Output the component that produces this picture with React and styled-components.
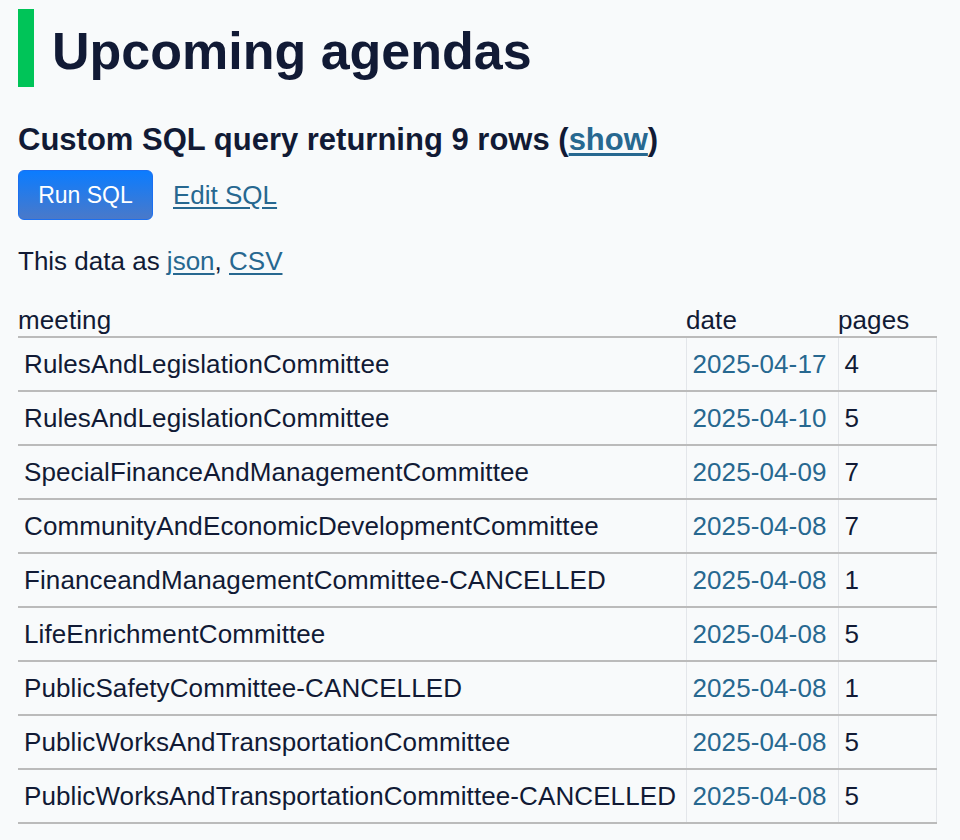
import styled, { createGlobalStyle } from "styled-components";

const Global = createGlobalStyle`
  body {
    margin: 0;
    background: #f8fafb;
    color: #111a35;
    font-family: "Liberation Sans", Arial, sans-serif;
  }
`;

const Page = styled.div`
  padding: 9px 18px 20px;
`;

const Title = styled.h1`
  margin: 0;
  font-size: 52px;
  font-weight: 700;
  line-height: 78px;
  border-left: 16px solid #00c458;
  padding-left: 18px;
  padding-top: 3px;
  height: 75px;
  color: #111a35;
`;

const Sub = styled.h2`
  margin: 33px 0 0;
  font-size: 31px;
  font-weight: 700;
  line-height: 40px;
`;

const Link = styled.a`
  color: #276890;
  text-decoration: ${(p) => (p.$plain ? "none" : "underline")};
  text-underline-offset: 3px;
`;

const Actions = styled.div`
  display: flex;
  align-items: center;
  gap: 20px;
  margin-top: 10px;
  font-size: 26px;
`;

const Button = styled.button`
  width: 135px;
  height: 50px;
  border: 1px solid #1b6ff0;
  border-radius: 6px;
  background: linear-gradient(#0b7cff, #4a79c9);
  color: #fff;
  font: 23px "Liberation Sans", Arial, sans-serif;
`;

const Para = styled.p`
  margin: 26px 0 0;
  font-size: 26px;
  line-height: 30px;
`;

const Table = styled.table`
  margin-top: 30px;
  border-collapse: collapse;
  font-size: 26px;
  letter-spacing: 0.1px;
  table-layout: fixed;
  width: 918px;
`;

const Th = styled.th`
  text-align: left;
  font-weight: 400;
  padding: 0 0 2px 0;
  line-height: 28px;
  border-bottom: 2px solid #bbb;
  width: ${(p) => p.$w}px;
`;

const Td = styled.td`
  padding: 11px 6px;
  line-height: 30px;
  border-bottom: 2px solid #bbb;
  border-left: ${(p) => (p.$first ? "none" : "1px solid #e3e6ea")};
  border-right: ${(p) => (p.$last ? "1px solid #e3e6ea" : "none")};
  white-space: nowrap;
`;

const rows = [
  ["RulesAndLegislationCommittee", "2025-04-17", 4],
  ["RulesAndLegislationCommittee", "2025-04-10", 5],
  ["SpecialFinanceAndManagementCommittee", "2025-04-09", 7],
  ["CommunityAndEconomicDevelopmentCommittee", "2025-04-08", 7],
  ["FinanceandManagementCommittee-CANCELLED", "2025-04-08", 1],
  ["LifeEnrichmentCommittee", "2025-04-08", 5],
  ["PublicSafetyCommittee-CANCELLED", "2025-04-08", 1],
  ["PublicWorksAndTransportationCommittee", "2025-04-08", 5],
  ["PublicWorksAndTransportationCommittee-CANCELLED", "2025-04-08", 5],
];

export default function App() {
  return (
    <Page>
      <Global />
      <Title>Upcoming agendas</Title>
      <Sub>
        Custom SQL query returning 9 rows (<Link href="#">show</Link>)
      </Sub>
      <Actions>
        <Button>Run SQL</Button>
        <Link href="#">Edit SQL</Link>
      </Actions>
      <Para>
        This data as <Link href="#">json</Link>, <Link href="#">CSV</Link>
      </Para>
      <Table>
        <thead>
          <tr>
            <Th $w={668}>meeting</Th>
            <Th $w={152}>date</Th>
            <Th $w={98}>pages</Th>
          </tr>
        </thead>
        <tbody>
          {rows.map(([m, d, p], i) => (
            <tr key={i}>
              <Td $first>{m}</Td>
              <Td>
                <Link href="#" $plain>{d}</Link>
              </Td>
              <Td $last>{p}</Td>
            </tr>
          ))}
        </tbody>
      </Table>
    </Page>
  );
}
